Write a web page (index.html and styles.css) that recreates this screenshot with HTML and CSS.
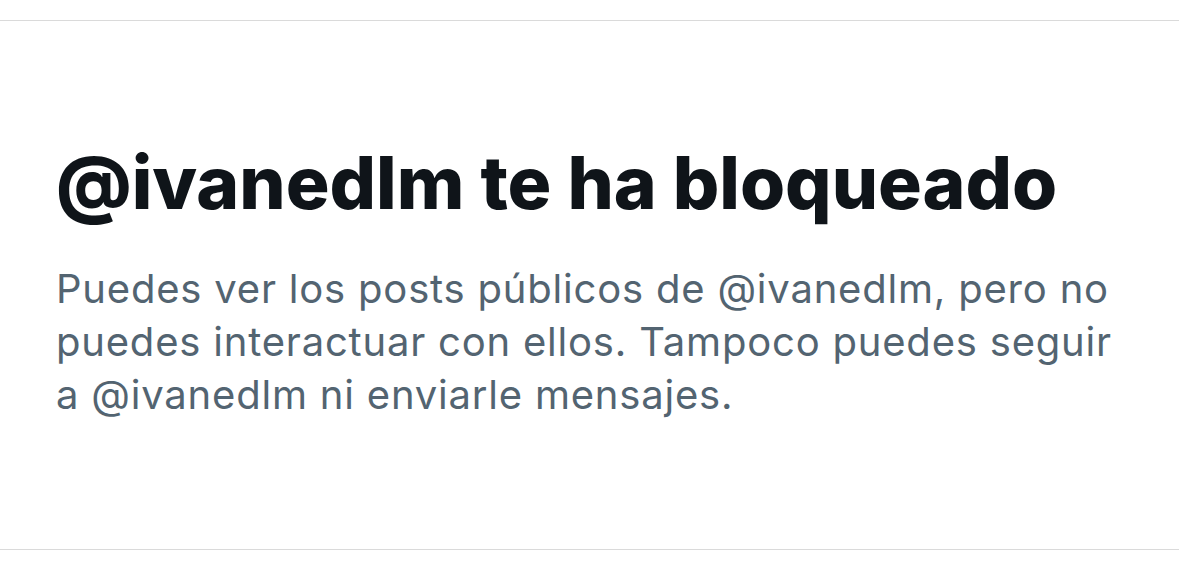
FILE: index.html
```html
<html>
<head>
    <meta http-equiv="Content-Type" content="text/html; charset=UTF-8" />
    <title>Bloqueado</title>
    <link rel="stylesheet" href="styles.css">
</head>
<body>

<div class="blockedBox">
    <h2 class="blockedTitle">@ivanedlm te ha bloqueado</h2>
    <p class="blockedText">Puedes ver los posts públicos de @ivanedlm, pero no puedes interactuar con ellos. Tampoco puedes seguir a @ivanedlm ni enviarle mensajes.</p>
</div>

</body>
</html>
```

FILE: styles.css
```css
html {
    width: 100%;
    height: 100%;
    overflow: hidden;
}

body {
    margin: 0;
    padding: 20px 0 0 0;
    background: #fff;
    font-family: Inter, "Noto Sans", Roboto, sans-serif;
}

.blockedBox {
    border-top: solid 1px #dadada;
    border-bottom: solid 1px #dadada;
    padding: 114px 56px 128px 56px;
}

.blockedTitle {
    margin: 0 0 31px 0;
    font-size: 73px;
    line-height: 96px;
    font-weight: 800;
    color: #0f1419;
    letter-spacing: 0;
}

.blockedText {
    margin: 0;
    font-size: 40px;
    line-height: 53px;
    font-weight: 400;
    color: #536471;
    letter-spacing: 0.8px;
    max-width: 1075px;
}
```
